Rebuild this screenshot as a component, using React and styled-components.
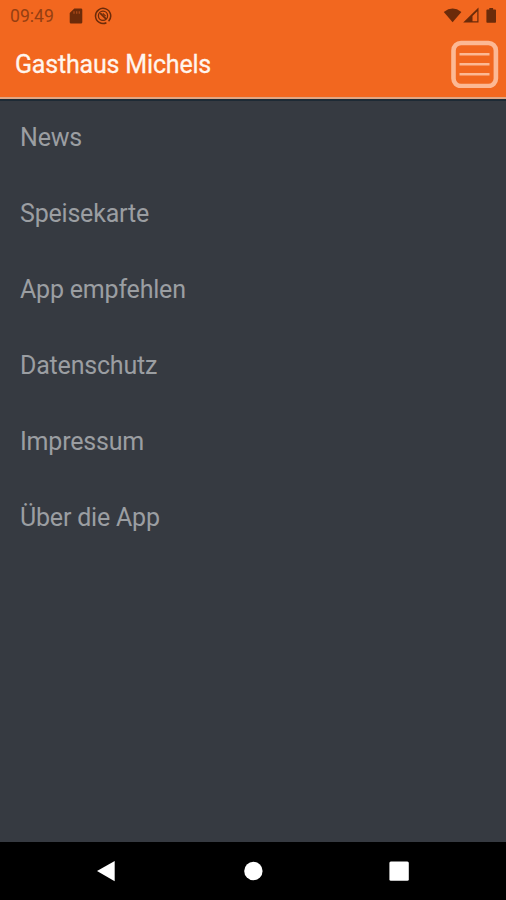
import styled, { createGlobalStyle } from "styled-components";

const menuItems = [
    "News",
    "Speisekarte",
    "App empfehlen",
    "Datenschutz",
    "Impressum",
    "Über die App",
];

export default function App() {
    return (
        <>
            <GlobalStyle />
            <Screen>
                <StatusBar>
                    <StatusGroup>
                        <Clock>09:49</Clock>
                        <SdCardIcon />
                        <SyncIcon />
                    </StatusGroup>
                    <SystemIcons />
                </StatusBar>
                <Header>
                    <Title>Gasthaus Michels</Title>
                    <MenuButton aria-label="Menü">
                        <MenuIcon />
                    </MenuButton>
                </Header>
                <Menu>
                    {menuItems.map((item) => (
                        <MenuItem key={item}>{item}</MenuItem>
                    ))}
                </Menu>
                <NavigationBar>
                    <NavButton aria-label="Zurück">
                        <svg width="22" height="24" viewBox="0 0 22 24">
                            <path d="M19.7 1.9v20.4L2 12.1z" fill="#fff" />
                        </svg>
                    </NavButton>
                    <NavButton aria-label="Start">
                        <svg width="22" height="24" viewBox="0 0 22 24">
                            <circle cx="11.4" cy="12" r="9.2" fill="#fff" />
                        </svg>
                    </NavButton>
                    <NavButton aria-label="Übersicht">
                        <svg width="22" height="24" viewBox="0 0 22 24">
                            <rect x="1.4" y="2.4" width="19.4" height="19.4" rx="1.5" fill="#fff" />
                        </svg>
                    </NavButton>
                </NavigationBar>
            </Screen>
        </>
    );
}

function SdCardIcon() {
    return (
        <StatusIcon width="14" height="18" viewBox="0 0 14 18" $gap={15}>
            <path d="M5.3 1.4H12a1.3 1.3 0 0 1 1.3 1.3v12.5a1.3 1.3 0 0 1-1.3 1.3H2a1.3 1.3 0 0 1-1.3-1.3V6z" />
            <path
                d="M5 4.2v2.6M7.7 4.2v2.6M10.3 4.2v2.6"
                stroke="#a9491a"
                strokeWidth="1.3"
            />
        </StatusIcon>
    );
}

function SyncIcon() {
    return (
        <StatusIcon width="18" height="18" viewBox="0 0 18 18" $gap={11}>
            <g fill="none" stroke="currentColor">
                <path d="M14.6 14.2A7.6 7.6 0 1 0 12.4 15.8" strokeWidth="1.5" />
                <circle cx="9" cy="8.8" r="4.6" strokeWidth="1.3" />
                <path d="M6.2 6.2l6 6" strokeWidth="1.8" />
                <path d="M8.8 6.4l2.8 2.8" strokeWidth="1.2" />
            </g>
        </StatusIcon>
    );
}

function SystemIcons() {
    return (
        <StatusIcon width="56" height="18" viewBox="0 0 56 18">
            <path d="M.8 5Q9.6-1.9 18.4 5L9.6 15.3z" />
            <path
                fillRule="evenodd"
                d="M35.5.6v14.9H20.2zM34.3 4.2l-4.8 4.8v5.2h4.8z"
            />
            <path d="M46.3.9h3.8v1.6h2.1a.8.8 0 0 1 .8.8v11.7a.8.8 0 0 1-.8.8h-8a.8.8 0 0 1-.8-.8V3.3a.8.8 0 0 1 .8-.8h2.1z" />
        </StatusIcon>
    );
}

function MenuIcon() {
    return (
        <svg width="48" height="48" viewBox="0 0 48 48" fill="none" stroke="#fcb894">
            <rect x="2.5" y="3" width="42.4" height="43" rx="7.5" strokeWidth="4.6" />
            <path d="M8.5 14.3h30M8.5 24.3h30M8.5 34.3h30" strokeWidth="2.6" />
        </svg>
    );
}

const GlobalStyle = createGlobalStyle`
    * {
        box-sizing: border-box;
    }

    body {
        margin: 0;
        font-family: Roboto, "Liberation Sans", sans-serif;
    }
`;

const Screen = styled.div`
    display: flex;
    flex-direction: column;
    width: 506px;
    height: 900px;
    overflow: hidden;
    background-color: #363a41;
`;

const StatusBar = styled.div`
    display: flex;
    align-items: center;
    justify-content: space-between;
    height: 32px;
    padding: 0 7px 0 10px;
    background-color: #f2671f;
    color: #6b2b0a;
`;

const StatusGroup = styled.div`
    display: flex;
    align-items: center;
`;

const Clock = styled.span`
    width: 44px;
    font-size: 17.6px;
    line-height: 32px;
    color: #963f12;
`;

const StatusIcon = styled.svg`
    flex: none;
    margin-left: ${({ $gap = 0 }) => $gap}px;
    fill: currentColor;
`;

const Header = styled.header`
    display: flex;
    align-items: center;
    justify-content: space-between;
    height: 67px;
    padding: 0 7px 2px 15px;
    border-bottom: 2px solid #dfa684;
    background-color: #f2671f;
`;

const Title = styled.h1`
    margin: 0;
    padding-top: 1px;
    font-size: 25px;
    font-weight: 400;
    letter-spacing: -0.18px;
    color: #fff5ee;
    -webkit-text-stroke: 0.3px #fff5ee;
`;

const MenuButton = styled.button`
    display: flex;
    padding: 0;
    border: 0;
    background: none;
`;

const Menu = styled.nav`
    flex: 1;
    border-top: 2px solid #1d2a35;
`;

const MenuItem = styled.a`
    display: flex;
    align-items: center;
    height: 76px;
    padding: 0 20px 4px;
    font-size: 25px;
    letter-spacing: -0.2px;
    color: #9b9ea2;
`;

const NavigationBar = styled.footer`
    display: flex;
    align-items: center;
    justify-content: space-between;
    height: 58px;
    padding: 0 96px 0 95px;
    background-color: #000;
`;

const NavButton = styled.button`
    display: flex;
    padding: 0;
    border: 0;
    background: none;
`;
